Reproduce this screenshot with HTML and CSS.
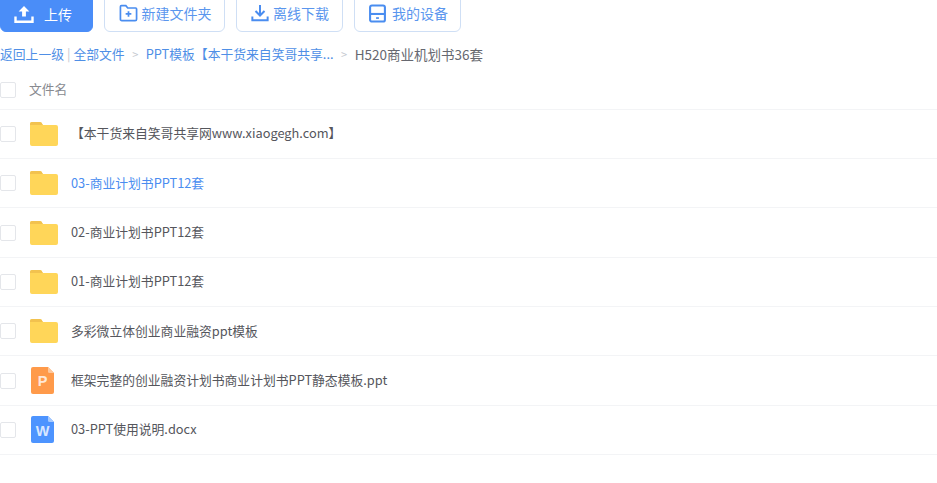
FILE: index.html
```html
<!DOCTYPE html>
<html lang="zh">
<head>
<meta charset="utf-8">
<title>文件</title>
<link rel="stylesheet" href="styles.css">
</head>
<body>
<div class="toolbar">
  <a class="btn primary">
    <svg class="ic-up" viewBox="0 0 20 20" width="20" height="20"><path d="M10 2 4.600 7.600h3.500v5h3.800v-5h3.500z" fill="#fff"/><path d="M1.500 12.500v5.200h17v-5.200" fill="none" stroke="#fff" stroke-width="2.400"/></svg>
    <span>上传</span>
  </a>
  <a class="btn b1">
    <svg viewBox="0 0 20 20" width="19" height="19"><path d="M1.500 16V2.800q0-1 1-1h4.700l2 2.400h8.300q1 0 1 1V16q0 1.500-1.500 1.500H3q-1.500 0-1.500-1.500z" fill="none" stroke="#4a8df0" stroke-width="1.800"/><path d="M10 7.500v6M7 10.500h6" stroke="#4a8df0" stroke-width="1.800"/></svg>
    <span>新建文件夹</span>
  </a>
  <a class="btn b2">
    <svg viewBox="0 0 20 20" width="18" height="18"><path d="M10 1v11M5 7.800l5 5 5-5" fill="none" stroke="#4a8df0" stroke-width="2.200"/><path d="M1.500 14v4h17v-4" fill="none" stroke="#4a8df0" stroke-width="2.200"/></svg>
    <span>离线下载</span>
  </a>
  <a class="btn b3">
    <svg viewBox="0 0 20 20" width="19" height="19"><rect x="2.200" y="1.500" width="15.600" height="17" rx="2" fill="none" stroke="#4a8df0" stroke-width="2.200"/><path d="M2.200 10.500h15.600" stroke="#4a8df0" stroke-width="2.200"/><path d="M8.500 14.800h3" stroke="#4a8df0" stroke-width="1.800"/></svg>
    <span>我的设备</span>
  </a>
</div>
<nav class="crumbs">
  <a>返回上一级</a><i class="bar">|</i><a>全部文件</a><i class="sep">&gt;</i><a>PPT模板【本干货来自笑哥共享...</a><i class="sep">&gt;</i><span class="cur">H520商业机划书36套</span>
</nav>
<div class="head">
  <b class="check"></b><span class="title">文件名</span>
</div>
<ul class="list">
  <li class="row"><b class="check"></b><svg class="folder" viewBox="0 0 28 24"><use href="#fd"/></svg><span class="name first">【本干货来自笑哥共享网www.xiaogegh.com】</span></li>
  <li class="row hover"><b class="check"></b><svg class="folder" viewBox="0 0 28 24"><use href="#fd"/></svg><span class="name">03-商业计划书PPT12套</span></li>
  <li class="row"><b class="check"></b><svg class="folder" viewBox="0 0 28 24"><use href="#fd"/></svg><span class="name">02-商业计划书PPT12套</span></li>
  <li class="row"><b class="check"></b><svg class="folder" viewBox="0 0 28 24"><use href="#fd"/></svg><span class="name">01-商业计划书PPT12套</span></li>
  <li class="row"><b class="check"></b><svg class="folder" viewBox="0 0 28 24"><use href="#fd"/></svg><span class="name">多彩微立体创业商业融资ppt模板</span></li>
  <li class="row"><b class="check"></b><svg class="doc" viewBox="0 0 23 27"><path d="M2 0h15l6 6v19a2 2 0 0 1-2 2H2a2 2 0 0 1-2-2V2a2 2 0 0 1 2-2z" fill="#ff9a4a"/><path d="M17 0l6 6h-4.500A1.500 1.500 0 0 1 17 4.500z" fill="#ffc89c"/><text x="11.500" y="19" class="doc-l">P</text></svg><span class="name">框架完整的创业融资计划书商业计划书PPT静态模板.ppt</span></li>
  <li class="row"><b class="check"></b><svg class="doc" viewBox="0 0 23 27"><path d="M2 0h15l6 6v19a2 2 0 0 1-2 2H2a2 2 0 0 1-2-2V2a2 2 0 0 1 2-2z" fill="#4d94ff"/><path d="M17 0l6 6h-4.500A1.500 1.500 0 0 1 17 4.500z" fill="#a6caff"/><text x="11.500" y="19.500" class="doc-l">W</text></svg><span class="name">03-PPT使用说明.docx</span></li>
</ul>
<svg class="defs" width="0" height="0"><defs><g id="fd"><path d="M0 2a2 2 0 0 1 2-2h8q2 0 2.500 2.500L13 3h13a2 2 0 0 1 2 2v17a2 2 0 0 1-2 2H2a2 2 0 0 1-2-2z" fill="#ffd659"/><path d="M2 0h8q2 0 2.500 2.500L13 3H0V2a2 2 0 0 1 2-2z" fill="#f2c24f"/></g></defs></svg>
</body>
</html>
```

FILE: styles.css
```css
* { box-sizing: border-box; }
html, body { margin: 0; padding: 0; background: #fff; overflow: hidden; }
body {
  width: 937px;
  height: 483px;
  font-family: "Noto Sans CJK SC", "Liberation Sans", sans-serif;
  font-size: 12.800px;
  color: #55565c;
}
.toolbar {
  display: flex;
  align-items: center;
  height: 38px;
  margin-top: -6px;
}
.btn {
  display: flex;
  align-items: center;
  justify-content: center;
  height: 38px;
  border: 1px solid #cfdff5;
  border-radius: 6px;
  background: #fff;
  color: #5a96ee;
  font-size: 14px;
  gap: 4px;
  padding-left: 1px;
  margin-left: 11px;
}
.btn.primary {
  width: 93px;
  margin-left: 0;
  justify-content: flex-start;
  padding-left: 13px;
  padding-top: 1px;
  background: #4a8df8;
  border-color: #4a8df8;
  color: #fff;
  gap: 10px;
  border-radius: 0 6px 6px 6px;
}
.b1 { width: 121px; }
.b2 { width: 107px; }
.b3 { width: 107px; gap: 5px; }
.crumbs {
  display: flex;
  align-items: center;
  height: 20px;
  margin-top: 12px;
  line-height: 20px;
  white-space: nowrap;
}
.crumbs a { color: #4f8fe6; }
.bar { font-style: normal; color: #c5c9d0; margin: 0 3px 0 3px; }
.sep { font-style: normal; color: #c5c9d0; margin: 0 7.500px; font-size: 11px; }
.cur { color: #666870; font-size: 13.500px; }
.head {
  display: flex;
  align-items: center;
  height: 45.800px;
  padding-top: 8px;
  border-bottom: 1px solid #f3f4f6;
}
.title { margin-left: 13px; margin-bottom: 4px; color: #888a90; }
.list {
  list-style: none;
  margin: 0;
  padding: 0;
  display: grid;
  grid-auto-rows: 49.330px;
}
.row {
  display: flex;
  align-items: center;
  border-bottom: 1px solid #f3f4f6;
}
.check {
  width: 16px;
  height: 16px;
  border: 1px solid #e4e6ea;
  border-radius: 2px;
  background: #fff;
  flex: none;
}
.folder { width: 28px; height: 24px; margin-left: 14px; flex: none; }
.doc { width: 23px; height: 27px; margin-left: 15px; margin-right: 4px; flex: none; }
.doc-l { fill: #fff; fill-opacity: .8; font-family: "Liberation Sans", sans-serif; font-size: 14.500px; font-weight: 700; text-anchor: middle; }
.name { margin-left: 13px; margin-bottom: 2px; color: #55565c; white-space: nowrap; }
.name.first { margin-bottom: 3px; }
.hover .name { color: #4a8df0; }
.defs { position: absolute; }
```
